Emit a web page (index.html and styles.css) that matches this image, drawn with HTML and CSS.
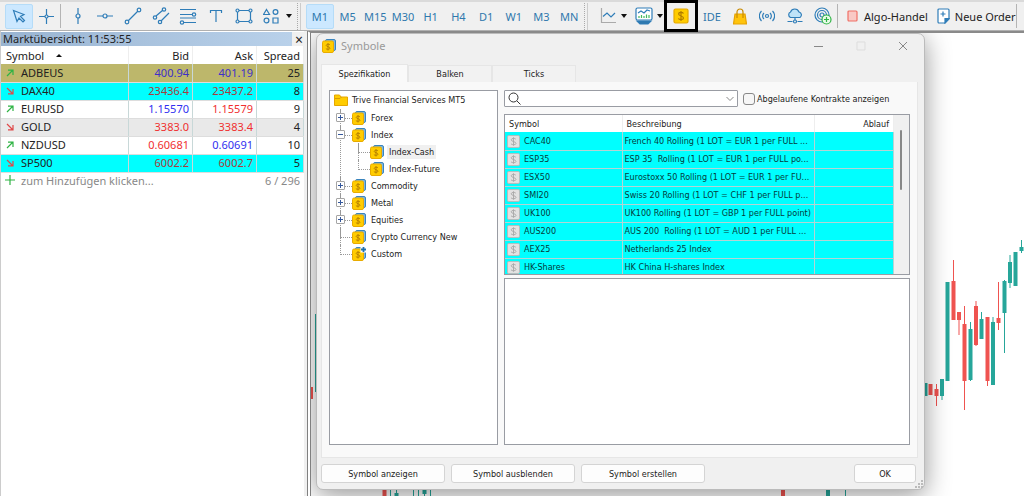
FILE: index.html
```html
<!DOCTYPE html>
<html lang="de">
<head>
    <meta charset="UTF-8">
    <meta name="viewport" content="width=device-width, initial-scale=1.0">
    <title>MetaTrader 5 - Symbole</title>
    <link rel="stylesheet" href="styles.css">
</head>
<body>
    <!-- Icon-Vorlagen -->
    <svg class="defs" aria-hidden="true">
        <symbol id="coin" viewBox="0 0 14 14">
            <rect x="3.5" y="0.5" width="10" height="11" rx="1.5" fill="#7db5e0" stroke="#3a84bd"/>
            <rect x="0.5" y="2" width="11" height="11.5" rx="1.5" fill="#ffcc00" stroke="#e8ab00"/>
            <path d="M8 5.8C7.5 5 4.2 5 4.2 6.400S8 7.700 8 9.200 4.700 10.500 3.900 9.700M6 4v7.500" fill="none" stroke="#b88200"/>
        </symbol>
        <symbol id="coin-gray" viewBox="0 0 14 14">
            <rect x="0.5" y="0.5" width="13" height="13" rx="1.5" fill="#e2e2e2" stroke="#b9b9b9"/>
            <path d="M9.5 4.5C8.8 3.300 4.500 3.200 4.500 5.200S9.700 7 9.700 9 5.300 10.900 4.300 9.500M7 2.500v9" fill="none" stroke="#a9a9a9"/>
        </symbol>
        <symbol id="up" viewBox="0 0 8 8"><path d="M1 7L6.500 1.500M2 1.200h5V6" fill="none" stroke="#2fb344" stroke-width="1.200"/></symbol>
        <symbol id="down" viewBox="0 0 8 8"><path d="M1 1L6.500 6.500M2 6.800h5V2" fill="none" stroke="#e04848" stroke-width="1.200"/></symbol>
    </svg>

    <header class="toolbar">
        <div class="group cursor-tools">
            <button class="tool active" aria-label="Cursor"><svg width="14" height="14" viewBox="0 0 14 14"><path d="M1.500 1.500l10.500 4-3.500 2 4 4-1.500 1.500-4-4-2 3.500z"/></svg></button>
            <button class="tool" aria-label="Fadenkreuz"><svg width="15" height="15" viewBox="0 0 15 15"><path d="M7.500 0v6M7.500 9v6M0 7.500h6M9 7.500h6"/><circle cx="7.500" cy="7.500" r="1.500"/></svg></button>
        </div>
        <span class="line"></span>
        <div class="group draw-tools">
            <button class="tool" aria-label="Vertikale Linie"><svg width="16" height="16" viewBox="0 0 16 16"><path d="M8 0v6M8 10v6"/><circle cx="8" cy="8" r="2"/></svg></button>
            <button class="tool" aria-label="Horizontale Linie"><svg width="18" height="16" viewBox="0 0 18 16"><path d="M1 8h6M11 8h6"/><circle cx="9" cy="8" r="2"/></svg></button>
            <button class="tool" aria-label="Trendlinie"><svg width="18" height="18" viewBox="0 0 18 18"><path d="M4 14L14 4"/><circle cx="3" cy="15" r="1.800"/><circle cx="15" cy="3" r="1.800"/></svg></button>
            <button class="tool" aria-label="Kanal"><svg width="18" height="18" viewBox="0 0 18 18"><path d="M4 9l7-6M9 14l8-8"/><circle cx="3" cy="10.500" r="1.700"/><circle cx="12" cy="2.500" r="1.700"/><circle cx="8" cy="15" r="1.700"/></svg></button>
            <button class="tool" aria-label="Fibonacci"><svg width="18" height="18" viewBox="0 0 18 18"><path d="M1 2.500h16M1 7.500h12M1 11h16M4 15.500h13"/><circle cx="15" cy="7.500" r="1.700"/><circle cx="3" cy="15.500" r="1.700"/></svg></button>
            <button class="tool" aria-label="Text"><svg width="14" height="14" viewBox="0 0 14 14"><path d="M1.500 4V1.500h11V4M7 1.500V13"/></svg></button>
            <button class="tool" aria-label="Rechteck"><svg width="18" height="16" viewBox="0 0 18 16"><path d="M4 2.500h10M4 13.500h10M2.500 4v8M15.500 4v8"/><circle cx="2.500" cy="2.500" r="1.500"/><circle cx="15.500" cy="2.500" r="1.500"/><circle cx="2.500" cy="13.500" r="1.500"/><circle cx="15.500" cy="13.500" r="1.500"/></svg></button>
            <button class="tool" aria-label="Formen"><svg width="16" height="16" viewBox="0 0 16 16"><path d="M3.500 1.500L6.500 6.500h-6zM10 10h5v5h-5z"/><circle cx="12.500" cy="4" r="2.400"/><circle cx="3.500" cy="12.500" r="2.400"/></svg></button>
        </div>
        <span class="caret"></span>
        <span class="grip"></span>
        <div class="group timeframes">
            <button class="tool active">M1</button>
            <button class="tool">M5</button>
            <button class="tool">M15</button>
            <button class="tool">M30</button>
            <button class="tool">H1</button>
            <button class="tool">H4</button>
            <button class="tool">D1</button>
            <button class="tool">W1</button>
            <button class="tool">M3</button>
            <button class="tool">MN</button>
        </div>
        <span class="grip"></span>
        <button class="tool chart-tool" aria-label="Charttyp"><svg width="18" height="18" viewBox="0 0 18 18"><path d="M2.500 1v14.500H17" stroke="#aaa"/><path d="M4 9.500l4-3.500 4 4 4-4"/></svg></button>
        <span class="caret"></span>
        <button class="tool chart-tool" aria-label="Indikatoren"><svg width="18" height="18" viewBox="0 0 18 18"><rect x="1" y="1" width="16" height="12" rx="1.500" fill="#fff"/><path d="M3 6l3-2 3 2 3-3 3 1"/><path d="M4 11V9M6.500 11V8M9 11V9M11.500 11V7.500M14 11V8" stroke="#43b95c"/><path d="M2 14h14l-3 3H5z" fill="#2f78ad"/></svg></button>
        <span class="caret"></span>
        <button class="tool marked" aria-label="Symbole"><svg width="16" height="16" viewBox="0 0 16 16"><rect x="1" y="1" width="14" height="14" rx="1.500" fill="#ffcc00" stroke="#e5a700"/><path d="M10.500 5.500C9.500 4 5.600 4 5.600 6s4.900 2 4.900 4-4.200 2-5.200.500M8 3v10" stroke="#b07c00"/></svg></button>
        <div class="group services">
            <button class="tool">IDE</button>
            <button class="tool" aria-label="Market"><svg width="14" height="17" viewBox="0 0 14 17"><path d="M2 6h10l1.500 10H.500z" fill="#ffc40c" stroke="#e5a100"/><path d="M4 10V4a3 3 0 0 1 6 0v6" stroke="#c88a00"/></svg></button>
            <button class="tool" aria-label="Signale"><svg width="16" height="14" viewBox="0 0 16 14"><circle cx="8" cy="7" r="1.500"/><path d="M5 4a4 4 0 0 0 0 6M11 4a4 4 0 0 1 0 6M2.500 2a7 7 0 0 0 0 10M13.500 2a7 7 0 0 1 0 10"/></svg></button>
            <button class="tool" aria-label="VPS"><svg width="18" height="16" viewBox="0 0 18 16"><path d="M4.500 9.500a3 3 0 0 1 0-5.500 4.500 4.500 0 0 1 8.500 0 3 3 0 0 1 1 5.500z" fill="#bfe3f8"/><path d="M9 9.500V12M1.500 13.500h5M11.500 13.500h5"/><circle cx="9" cy="13.500" r="1.500"/></svg></button>
            <button class="tool" aria-label="Copy Trading"><svg width="18" height="18" viewBox="0 0 18 18"><circle cx="8" cy="8" r="7"/><circle cx="8" cy="8" r="4.500"/><circle cx="8" cy="8" r="2"/><circle cx="12.500" cy="12.500" r="4.500" fill="#e9fbe9" stroke="#2fb344"/><path d="M10 12.500h5M12.500 10v5" stroke="#2fb344"/></svg></button>
        </div>
        <span class="line"></span>
        <button class="wide"><svg width="12" height="12" viewBox="0 0 12 12"><rect x="1" y="1" width="9" height="10" rx="1" fill="#f9c9c5" stroke="#f07066"/></svg>Algo-Handel</button>
        <button class="wide"><svg width="13" height="16" viewBox="0 0 13 16"><path d="M2 1h9a1 1 0 0 1 1 1v9l-4 4H2a1 1 0 0 1-1-1V2a1 1 0 0 1 1-1z" fill="#fff"/><path d="M12 10.500H8V15z" fill="#2f7db8"/><path d="M6 3.500v5M3.500 6h5"/></svg>Neue Order</button>
        <span class="line"></span>
    </header>

    <main class="workspace">
        <aside class="market">
            <div class="market-title"><span>Marktübersicht: 11:53:55</span><button aria-label="Schließen">×</button></div>
            <table class="quotes">
                <colgroup><col><col class="price"><col class="price"><col class="spread"></colgroup>
                <thead>
                    <tr><th>Symbol <span class="sort"></span></th><th>Bid</th><th>Ask</th><th>Spread</th></tr>
                </thead>
                <tbody>
                    <tr class="khaki"><td><svg><use href="#up"/></svg>ADBEUS</td><td class="blue">400.94</td><td class="blue">401.19</td><td>25</td></tr>
                    <tr class="cyan"><td><svg><use href="#down"/></svg>DAX40</td><td class="red">23436.4</td><td class="red">23437.2</td><td>8</td></tr>
                    <tr><td><svg><use href="#up"/></svg>EURUSD</td><td class="blue">1.15570</td><td class="red">1.15579</td><td>9</td></tr>
                    <tr class="gray"><td><svg><use href="#down"/></svg>GOLD</td><td class="red">3383.0</td><td class="red">3383.4</td><td>4</td></tr>
                    <tr><td><svg><use href="#up"/></svg>NZDUSD</td><td class="red">0.60681</td><td class="blue">0.60691</td><td>10</td></tr>
                    <tr class="cyan"><td><svg><use href="#down"/></svg>SP500</td><td class="red">6002.2</td><td class="red">6002.7</td><td>5</td></tr>
                </tbody>
            </table>
            <div class="add-row"><svg width="10" height="10" viewBox="0 0 10 10"><path d="M5 0v10M0 5h10" stroke="#2fb344" stroke-width="1.200"/></svg><span>zum Hinzufügen klicken...</span><span>6 / 296</span></div>
        </aside>

        <section class="chart">
            <svg class="candles" viewBox="311 33 713 463" preserveAspectRatio="xMaxYMin slice">
                <g stroke="#ef5350">
                    <path d="M936.500 384v22M953.500 260v60M959 312v23M964.500 306v104M976 301v45M987.500 317v69M998.500 282v48" stroke-width="1"/>
                    <path d="M312 387v12" stroke-width="2"/>
                    <path d="M930.500 384v11M936.500 389v7M953.500 281v39M959 312v8M964.500 324v57M976 306v39M987.500 317v64M998.500 318v5M384.500 488v8M783 488v8" stroke-width="4"/>
                </g>
                <g stroke="#26a69a">
                    <path d="M315.500 314v78M942 379v21M970.500 322v59M981.500 312v27M993 317v68M1004.500 280v73M1010 255v33M1021.500 240v13M390.500 488v8M396.500 488v8M413.500 488v8M418.500 488v8M424.500 488v8M430.500 488v8M845.500 488v8" stroke-width="1"/>
                    <path d="M925.500 383v13M942 379v17M947.500 282v99M970.500 329v51M981.500 319v20M993 322v63M1004.500 281v32M1010 262v21M1015.500 252v34M1021.500 247v4M396.500 493v3M424.500 488v6M828 488v8" stroke-width="4"/>
                </g>
            </svg>

            <div class="dialog" role="dialog" aria-label="Symbole">
                <div class="dialog-title">
                    <svg width="14" height="14"><use href="#coin"/></svg>
                    <h1>Symbole</h1>
                    <button aria-label="Minimieren"><svg width="10" height="10" viewBox="0 0 10 10"><path d="M0 5.500h9"/></svg></button>
                    <button aria-label="Maximieren" disabled><svg width="10" height="10" viewBox="0 0 10 10"><path d="M1 1h8v8H1z"/></svg></button>
                    <button aria-label="Schließen"><svg width="10" height="10" viewBox="0 0 10 10"><path d="M1 1l8 8M9 1L1 9"/></svg></button>
                </div>
                <nav class="tabs">
                    <button class="selected">Spezifikation</button>
                    <button>Balken</button>
                    <button>Ticks</button>
                </nav>
                <div class="page">
                    <div class="tree">
                        <div class="root"><svg width="14" height="12" viewBox="0 0 14 12"><path d="M.500 1h5l1.500 2h6.500v8.500H.500z" fill="#ffcc00" stroke="#e5a700"/><path d="M1 4.500h5L7.500 3" fill="none" stroke="#d99b00"/></svg>Trive Financial Services MT5</div>
                        <ul>
                            <li><span class="node"><i class="box plus"></i><svg><use href="#coin"/></svg><b>Forex</b></span></li>
                            <li><span class="node"><i class="box"></i><svg><use href="#coin"/></svg><b>Index</b></span>
                                <ul>
                                    <li><span class="node"><svg><use href="#coin"/></svg><b class="current">Index-Cash</b></span></li>
                                    <li><span class="node"><svg><use href="#coin"/></svg><b>Index-Future</b></span></li>
                                </ul>
                            </li>
                            <li><span class="node"><i class="box plus"></i><svg><use href="#coin"/></svg><b>Commodity</b></span></li>
                            <li><span class="node"><i class="box plus"></i><svg><use href="#coin"/></svg><b>Metal</b></span></li>
                            <li><span class="node"><i class="box plus"></i><svg><use href="#coin"/></svg><b>Equities</b></span></li>
                            <li><span class="node"><svg><use href="#coin"/></svg><b>Crypto Currency New</b></span></li>
                            <li><span class="node"><svg viewBox="0 0 14 14"><use href="#coin"/><path d="M8.500 0H14v5.500H8.500z" fill="#fff"/><path d="M11.500 0v5M9 2.500h5" stroke="#1f6fae" stroke-width="1.800"/></svg><b>Custom</b></span></li>
                        </ul>
                    </div>
                    <div class="details">
                        <div class="filter">
                            <div class="search">
                                <svg width="13" height="13" viewBox="0 0 13 13"><circle cx="5.500" cy="5.500" r="4.500"/><path d="M9 9l3.500 3.500"/></svg>
                                <input type="text" aria-label="Symbol suchen">
                                <svg width="8" height="6" viewBox="0 0 8 6"><path d="M.500 1L4 4.500 7.500 1" stroke="#888"/></svg>
                            </div>
                            <input type="checkbox" id="expired">
                            <label for="expired">Abgelaufene Kontrakte anzeigen</label>
                        </div>
                        <div class="list">
                            <table class="symbols">
                                <colgroup><col class="name"><col><col class="expiry"></colgroup>
                                <thead>
                                    <tr><th>Symbol</th><th>Beschreibung</th><th>Ablauf</th></tr>
                                </thead>
                                <tbody>
                                    <tr><td><svg><use href="#coin-gray"/></svg>CAC40</td><td>French 40 Rolling (1 LOT = EUR 1 per FULL ...</td><td></td></tr>
                                    <tr><td><svg><use href="#coin-gray"/></svg>ESP35</td><td>ESP 35&nbsp; Rolling (1 LOT = EUR 1 per FULL po...</td><td></td></tr>
                                    <tr><td><svg><use href="#coin-gray"/></svg>ESX50</td><td>Eurostoxx 50 Rolling (1 LOT = EUR 1 per FU...</td><td></td></tr>
                                    <tr><td><svg><use href="#coin-gray"/></svg>SMI20</td><td>Swiss 20 Rolling (1 LOT = CHF 1 per FULL p...</td><td></td></tr>
                                    <tr><td><svg><use href="#coin-gray"/></svg>UK100</td><td>UK100 Rolling (1 LOT = GBP 1 per FULL point)</td><td></td></tr>
                                    <tr><td><svg><use href="#coin-gray"/></svg>AUS200</td><td>AUS 200&nbsp; Rolling (1 LOT = AUD 1 per FULL ...</td><td></td></tr>
                                    <tr><td><svg><use href="#coin-gray"/></svg>AEX25</td><td>Netherlands 25 Index</td><td></td></tr>
                                    <tr><td><svg><use href="#coin-gray"/></svg>HK-Shares</td><td>HK China H-shares Index</td><td></td></tr>
                                </tbody>
                            </table>
                            <div class="scroll"><span></span></div>
                        </div>
                        <div class="info"></div>
                    </div>
                </div>
                <footer class="actions">
                    <button>Symbol anzeigen</button>
                    <button>Symbol ausblenden</button>
                    <button>Symbol erstellen</button>
                    <button class="ok">OK</button>
                    <svg class="resize" width="8" height="8" viewBox="0 0 8 8"><path d="M6 0h2v2H6zM6 3h2v2H6zM6 6h2v2H6zM3 3h2v2H3zM3 6h2v2H3zM0 6h2v2H0z"/></svg>
                </footer>
            </div>
        </section>
    </main>
</body>
</html>
```
FILE: styles.css
```css
* {
    box-sizing: border-box;
}
body {
    margin: 0;
    height: 100vh;
    display: flex;
    flex-direction: column;
    overflow: hidden;
    background: #f0f0f0;
    color: #222;
    font-family: "Noto Sans", "Open Sans", sans-serif;
    font-size: 11px;
}
button {
    padding: 0;
    border: 0;
    background: none;
    color: inherit;
    font: inherit;
}
svg {
    display: block;
    flex: none;
}
.defs {
    display: none;
}

/* Werkzeugleiste */
.toolbar {
    display: flex;
    align-items: center;
    flex: none;
    height: 31px;
    border-top: 2px solid #dadada;
    border-bottom: 1px solid #b0b0b0;
    color: #2f78ad;
}
.toolbar svg {
    fill: none;
    stroke: #2f7db8;
    stroke-width: 1.2;
}
.group {
    display: flex;
    flex: none;
}
.tool {
    display: flex;
    flex: 1;
    align-items: center;
    justify-content: center;
    min-width: 0;
    height: 25px;
    border: 1px solid transparent;
    border-radius: 2px;
}
.tool.active {
    background: #cce8ff;
    border-color: #b5dcf8;
}
.cursor-tools {
    width: 55px;
    margin-left: 5px;
}
.draw-tools {
    width: 221px;
    margin: 0 1px 0 3px;
}
.timeframes {
    width: 277px;
    margin-left: 5px;
}
.services {
    width: 139px;
}
.line {
    flex: none;
    width: 1px;
    height: 24px;
    background: #b4b4b4;
}
.grip {
    flex: none;
    width: 4px;
    height: 27px;
    margin-left: 5px;
    border-left: 1px dotted #aaa;
    border-right: 1px solid #ccc;
}
.timeframes + .grip {
    margin-left: 1px;
}
.caret {
    flex: none;
    border: 3px solid transparent;
    border-top: 4px solid #111;
    border-bottom: 0;
}
.toolbar .chart-tool {
    flex: none;
    width: 26px;
    margin-left: 7px;
}
.toolbar .caret + .chart-tool {
    margin-left: 4px;
}
.toolbar .marked {
    flex: none;
    width: 34px;
    height: 32px;
    margin-left: 1px;
    border: 3px solid #000;
    border-radius: 0;
    z-index: 1;
}
.wide {
    display: flex;
    align-items: center;
    gap: 5px;
    margin-left: 9px;
    color: #222;
    white-space: nowrap;
}

/* Marktübersicht */
.workspace {
    display: flex;
    flex: 1;
    min-height: 0;
}
.market {
    flex: none;
    width: 307px;
    padding-top: 1px;
    border-left: 1px solid #ccc;
    background: linear-gradient(#fff, #fff) 0 0 / 303px 100% no-repeat;
}
.market-title {
    display: flex;
    height: 14px;
    line-height: 13px;
    background: #f0f0f0;
}
.market-title span {
    flex: 1;
    padding-left: 2px;
    background: linear-gradient(90deg, #99b4d1, #b9d1ea);
}
.market-title button {
    width: 14px;
    margin-right: 1px;
    font-size: 14px;
    line-height: 13px;
}
.quotes {
    width: 303px;
    border-collapse: collapse;
    table-layout: fixed;
}
.price {
    width: 64px;
}
.spread {
    width: 47px;
}
.quotes th {
    height: 18px;
    padding: 0 3px;
    border-right: 1px solid #eee;
    font-weight: normal;
    text-align: right;
}
.quotes th:first-child {
    padding-left: 5px;
    text-align: left;
}
.quotes td {
    height: 18px;
    padding: 0 3px;
    border-right: 1px solid #c8d8d8;
    border-bottom: 1px solid #ddd;
    line-height: 16px;
    text-align: right;
}
.quotes td:first-child {
    text-align: left;
}
.quotes svg {
    display: inline-block;
    width: 8px;
    height: 8px;
    margin: 0 7px 0 2px;
}
.sort {
    display: inline-block;
    margin-left: 9px;
    border: 3px solid transparent;
    border-bottom-color: #111;
    vertical-align: 3px;
    border-top: 0;
}
.khaki {
    background: #bdb76b;
}
.cyan {
    background: #00ffff;
}
.gray {
    background: #e9e9e9;
}
.blue {
    color: #3030f0;
}
.red {
    color: #f03030;
}
.khaki .blue {
    color: #3c30c8;
}
.cyan .red {
    color: #a83c3c;
}
.add-row {
    display: flex;
    align-items: center;
    width: 303px;
    height: 15px;
    padding: 0 4px;
    gap: 6px;
    color: #888;
}
.add-row span:last-child {
    margin-left: auto;
}

/* Chart */
.chart {
    position: relative;
    flex: 1;
    border-left: 4px double #808080;
    border-top: 2px solid #8a8a8a;
    background: #fff;
    overflow: hidden;
}
.candles {
    width: 100%;
    height: 100%;
}

/* Dialog */
.dialog {
    position: absolute;
    top: 0;
    left: 5px;
    right: 99px;
    bottom: 6px;
    display: flex;
    flex-direction: column;
    padding: 0 6px 0 4px;
    border: 1px solid #bbb;
    border-radius: 7px;
    background: #f0f0f0;
    box-shadow: 0 5px 26px rgba(0, 0, 0, 0.42);
    font-family: "DejaVu Sans Condensed", "DejaVu Sans", sans-serif;
    font-size: 9px;
}
.dialog-title {
    display: flex;
    align-items: center;
    height: 23px;
    flex: none;
    margin-right: -6px;
    padding-left: 1px;
    color: #999;
}
.dialog-title h1 {
    flex: 1;
    margin: 0 0 0 5px;
    font-family: "Noto Sans", sans-serif;
    font-size: 11px;
    font-weight: normal;
}
.dialog-title button {
    display: flex;
    justify-content: center;
    width: 42px;
    stroke: #888;
    fill: none;
}
.dialog-title button:disabled {
    stroke: #ddd;
}
.tabs {
    display: flex;
    align-items: flex-end;
    flex: none;
    height: 25px;
}
.tabs button {
    width: 84px;
    height: 17px;
    border: 1px solid #e6e6e6;
    border-bottom: 0;
    background: #f2f2f2;
}
.tabs .selected {
    width: 87px;
    height: 18px;
    background: #f9f9f9;
}
.page {
    display: flex;
    flex: 1;
    gap: 6px;
    min-height: 0;
    padding: 8px 7px 12px;
    border: 1px solid #e6e6e6;
    border-top: 0;
    background: #f9f9f9;
}
.tree {
    flex: none;
    width: 169px;
    padding: 0 4px;
    border: 1px solid #999ca3;
    background: #fff;
}
.root {
    display: flex;
    align-items: center;
    gap: 4px;
    height: 18px;
}
.tree ul {
    margin: 0;
    padding: 0 0 0 6px;
    list-style: none;
}
.tree ul ul {
    padding-left: 17px;
}
.tree li {
    border-left: 1px dotted #999;
}
.tree li:last-child {
    border-color: transparent;
}
.node {
    position: relative;
    display: flex;
    align-items: center;
    height: 17px;
    padding-left: 11px;
    gap: 3px;
}
/* gestrichelte Verbindung zum Eintrag */
.node::before {
    content: "";
    position: absolute;
    left: -1px;
    top: 0;
    width: 11px;
    height: 9px;
    border-bottom: 1px dotted #999;
    border-left: 1px dotted #999;
}
.node svg {
    width: 14px;
    height: 14px;
}
.node b {
    padding: 2px;
    font-weight: normal;
    white-space: nowrap;
}
.node .current {
    background: #f0f0f0;
}
.box {
    position: absolute;
    left: -5px;
    top: 4px;
    width: 9px;
    height: 9px;
    border: 1px solid #a5a5a5;
    border-radius: 1px;
    background: linear-gradient(#35589c, #35589c) center / 5px 1px no-repeat, #fff;
}
.box.plus {
    background: linear-gradient(#35589c, #35589c) center / 5px 1px no-repeat, linear-gradient(#35589c, #35589c) center / 1px 5px no-repeat, #fff;
}
.details {
    display: flex;
    flex: 1;
    flex-direction: column;
    min-width: 0;
}
.filter {
    display: flex;
    align-items: center;
    height: 17px;
    flex: none;
}
.search {
    display: flex;
    align-items: center;
    width: 234px;
    height: 17px;
    padding: 0 3px;
    border: 1px solid #999ca3;
    border-radius: 1px;
    background: #fff;
    fill: none;
    stroke: #333;
}
.search input {
    flex: 1;
    min-width: 0;
    height: 13px;
    border: 0;
    outline: 0;
    font: inherit;
}
.filter input[type="checkbox"] {
    appearance: none;
    width: 12px;
    height: 12px;
    margin: 0 2px 0 5px;
    border: 1px solid #888;
    border-radius: 3px;
    background: #f6f6f6;
}
.list {
    display: flex;
    align-items: flex-start;
    flex: none;
    height: 161px;
    margin-top: 7px;
    border: 1px solid #999ca3;
    background: #f0f0f0;
    overflow: hidden;
}
.symbols {
    flex: 1;
    min-width: 0;
    border-collapse: collapse;
    table-layout: fixed;
    background: #fff;
}
.symbols .name {
    width: 117px;
}
.symbols .expiry {
    width: 79px;
}
.symbols th {
    height: 17px;
    padding: 0 4px;
    border-right: 1px solid #eee;
    font-weight: normal;
    text-align: left;
}
.symbols th:last-child {
    text-align: right;
}
.symbols td {
    height: 18px;
    padding: 0 2px;
    border-right: 1px solid #b4d4d4;
    border-bottom: 1px solid #b4d4d4;
    background: #00ffff;
    color: #053c3c;
    line-height: 16px;
    white-space: nowrap;
    overflow: hidden;
}
.symbols svg {
    display: inline-block;
    width: 13px;
    height: 13px;
    margin-right: 4px;
    vertical-align: middle;
}
.scroll {
    flex: none;
    width: 15px;
    padding: 15px 6px 0;
}
.scroll span {
    display: block;
    width: 2px;
    height: 60px;
    border-radius: 1px;
    background: #888;
}
.info {
    flex: 1;
    margin-top: 3px;
    border: 1px solid #999ca3;
    background: #fff;
}
.actions {
    position: relative;
    display: flex;
    flex: none;
    gap: 6px;
    padding: 6px 2px 6px 0;
}
.actions button {
    width: 124px;
    height: 19px;
    border: 1px solid #d4d4d4;
    border-radius: 3px;
    background: #fdfdfd;
}
.actions .ok {
    width: 62px;
    margin-left: auto;
}
.resize {
    position: absolute;
    right: -5px;
    bottom: 1px;
    fill: #bbb;
}
```
